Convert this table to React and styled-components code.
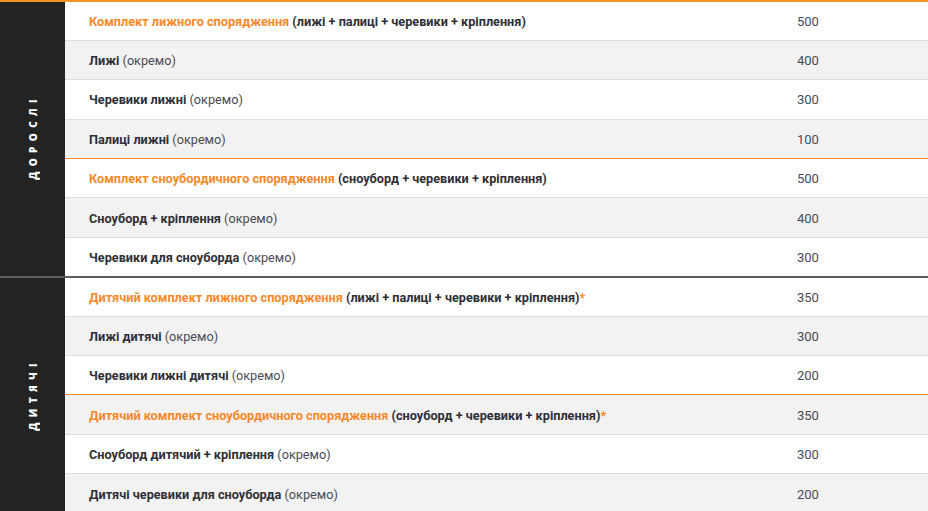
import React from 'react'
import styled, { createGlobalStyle } from 'styled-components'

const GlobalStyle = createGlobalStyle`
  html, body {
    margin: 0;
    padding: 0;
    background: #fff;
  }
  body {
    font-family: Roboto, 'Liberation Sans', sans-serif;
  }
`

const colors = {
  orange: '#f7892b',
  dark: '#232323',
  text: '#2f2f36',
  muted: '#4a4a55',
  stripe: '#f2f2f2',
  line: '#dedede',
}

const Table = styled.table`
  width: 928px;
  border-collapse: collapse;
  border-top: 2px solid #f39322;
  font-size: 12.7px;
  color: ${colors.text};
`

const Group = styled.tbody`
  & + & {
    border-top: 2px solid #5e5e5e;
  }
  tr:nth-child(even) td {
    background: ${colors.stripe};
  }
`

const Side = styled.th`
  width: 65px;
  padding: 0;
  background: ${colors.dark};
  vertical-align: middle;
`

const SideLabel = styled.span`
  display: inline-block;
  writing-mode: vertical-rl;
  transform: rotate(180deg);
  color: #fff;
  font-family: 'Open Sans', sans-serif;
  font-weight: 800;
  font-size: 10px;
  letter-spacing: 5.4px;
  text-transform: uppercase;
`

const Row = styled.tr`
  height: 39.4px;
  td {
    border-top: 1px solid ${(p) => (p.$accent ? colors.orange : colors.line)};
  }
  &:first-child td {
    border-top: none;
  }
`

const Name = styled.td`
  padding: 1px 0 0 24px;
  background: #fff;
  font-weight: 700;
  white-space: nowrap;
`

const Price = styled.td`
  width: 131px;
  padding: 1px 0 0 24px;
  background: #fff;
  color: ${colors.muted};
  font-weight: 400;
  font-size: 13px;
`

const Highlight = styled.span`
  color: ${colors.orange};
`

const Note = styled.span`
  color: ${colors.muted};
  font-weight: 400;
`

const Star = styled.span`
  color: ${colors.orange};
`

const groups = [
  {
    label: 'Дорослі',
    items: [
      { hl: 'Комплект лижного спорядження', rest: ' (лижі + палиці + черевики + кріплення)', price: 500 },
      { name: 'Лижі', note: true, price: 400 },
      { name: 'Черевики лижні', note: true, price: 300 },
      { name: 'Палиці лижні', note: true, price: 100 },
      { hl: 'Комплект сноубордичного спорядження', rest: ' (сноуборд + черевики + кріплення)', price: 500, accent: true },
      { name: 'Сноуборд + кріплення', note: true, price: 400 },
      { name: 'Черевики для сноуборда', note: true, price: 300 },
    ],
  },
  {
    label: 'Дитячі',
    items: [
      { hl: 'Дитячий комплект лижного спорядження', rest: ' (лижі + палиці + черевики + кріплення)', star: true, price: 350 },
      { name: 'Лижі дитячі', note: true, price: 300 },
      { name: 'Черевики лижні дитячі', note: true, price: 200 },
      { hl: 'Дитячий комплект сноубордичного спорядження', rest: ' (сноуборд + черевики + кріплення)', star: true, price: 350, accent: true },
      { name: 'Сноуборд дитячий + кріплення', note: true, price: 300 },
      { name: 'Дитячі черевики для сноуборда', note: true, price: 200 },
    ],
  },
]

const App = () => (
  <>
    <GlobalStyle />
    <Table>
      {groups.map((g) => (
        <Group key={g.label}>
          {g.items.map((item, i) => (
            <Row key={i} $accent={item.accent}>
              {i === 0 && (
                <Side rowSpan={g.items.length}>
                  <SideLabel>{g.label}</SideLabel>
                </Side>
              )}
              <Name>
                {item.hl ? (
                  <>
                    <Highlight>{item.hl}</Highlight>
                    {item.rest}
                    {item.star && <Star>*</Star>}
                  </>
                ) : (
                  <>
                    {item.name}
                    {item.note && <Note> (окремо)</Note>}
                  </>
                )}
              </Name>
              <Price>{item.price}</Price>
            </Row>
          ))}
        </Group>
      ))}
    </Table>
  </>
)

export default App
